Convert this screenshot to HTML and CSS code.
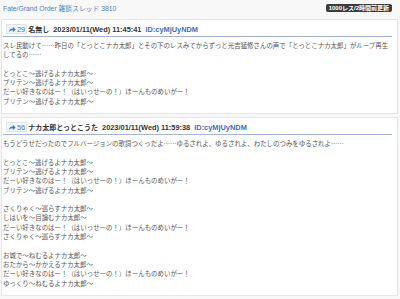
FILE: index.html
```html
<!DOCTYPE html>
<html lang="ja">
<head>
    <meta charset="UTF-8">
    <meta name="viewport" content="width=device-width, initial-scale=1.0">
    <title>Fate/Grand Order 雑談スレッド 3810</title>
    <link rel="stylesheet" href="styles.css">
</head>
<body>
    <div class="top">
        <a class="thread-title" href="#">Fate/Grand Order 雑談スレッド 3810</a>
        <span class="badge">1000レス/2時間前更新</span>
    </div>

    <div class="post">
        <div class="post-head">
            <span class="res-no">
                <svg class="arrow" viewBox="0 0 10 8" width="8" height="7"><path d="M1 7.5 C1.5 4 3.5 2.8 6 2.8 V0.5 L9.6 3.9 L6 7.3 V5 C4 5 2.3 5.6 1 7.5 Z" fill="#3f7bc4"/></svg>29
            </span>
            <span class="name">名無し</span>
            <span class="date">2023/01/11(Wed) 11:45:41</span>
            <span class="uid">ID:cyMjUyNDM</span>
        </div>
        <p class="post-body">スレ民動けて……昨日の「とっとこナカ太郎」とその下のレスみてからずっと光吉猛修さんの声で「とっとこナカ太郎」がループ再生してるの……<br><br>とっとこ～逃げるよナカ太郎～<br>ブリテン～逃げるよナカ太郎～<br>だーい好きなのはー！（はいっせーの！）ほーんものめいがー！<br>ブリテン～逃げるよナカ太郎～</p>
    </div>

    <div class="post">
        <div class="post-head">
            <span class="res-no">
                <svg class="arrow" viewBox="0 0 10 8" width="8" height="7"><path d="M1 7.5 C1.5 4 3.5 2.8 6 2.8 V0.5 L9.6 3.9 L6 7.3 V5 C4 5 2.3 5.6 1 7.5 Z" fill="#3f7bc4"/></svg>56
            </span>
            <span class="name">ナカ太郎とっとこうた</span>
            <span class="date">2023/01/11(Wed) 11:59:38</span>
            <span class="uid">ID:cyMjUyNDM</span>
        </div>
        <p class="post-body">もうどうせだったのでフルバージョンの歌詞つくったよ……ゆるされよ、ゆるされよ、わたしのつみをゆるされよ……<br><br>とっとこ～逃げるよナカ太郎～<br>ブリテン～逃げるよナカ太郎～<br>だーい好きなのはー！（はいっせーの！）ほーんものめいがー！<br>ブリテン～逃げるよナカ太郎～<br><br>さくりゃく～巡らすナカ太郎～<br>しはいを～目論むナカ太郎～<br>だーい好きなのはー！（はいっせーの！）ほーんものめいがー！<br>さくりゃく～巡らすナカ太郎～<br><br>お城で～ねむるよナカ太郎～<br>おたから～かかえるナカ太郎～<br>だーい好きなのはー！（はいっせーの！）ほーんものめいがー！<br>ゆっくり～ねむるよナカ太郎～</p>
    </div>
</body>
</html>
```

FILE: styles.css
```css
body {
    font-family: "Liberation Sans", "Noto Sans CJK JP", sans-serif;
    background-color: #f8f8f8;
    color: #555;
    margin: 0;
    padding: 0;
}
.top {
    display: flex;
    justify-content: space-between;
    align-items: center;
    height: 19px;
    padding: 0 8px 4px 3px;
    box-sizing: border-box;
}
.thread-title {
    color: #4f82c2;
    font-size: 6.8px;
    text-decoration: none;
}
.badge {
    background-color: #3d3d3d;
    color: #fff;
    font-size: 6px;
    font-weight: bold;
    line-height: 8px;
    padding: 0 3px;
    border-radius: 2px;
}
.post {
    margin: 0 2px 3px 1px;
    padding: 0 5px 0 1px;
    background: #fff;
    border: 1px solid #e6e6e6;
}
.post-head {
    display: flex;
    align-items: center;
    padding: 4px 0 2px 3px;
    border-bottom: 1px solid #a3b4d4;
    font-size: 7.4px;
    font-weight: bold;
    color: #333;
}
.res-no {
    display: flex;
    align-items: center;
    gap: 1px;
    height: 10px;
    padding: 0 1px 0 1px;
    margin-right: 1px;
    background: #f3f6fb;
    border: 1px solid #dde4ef;
    box-sizing: border-box;
    color: #3f7bc4;
    font-weight: normal;
}
.name {
    font-size: 7px;
}
.date {
    margin-left: 4px;
}
.uid {
    margin-left: 4px;
    color: #3a6fbf;
}
.post-body {
    margin: 0;
    padding: 4px 0 7px;
    font-family: "Noto Sans CJK JP", sans-serif;
    font-size: 6.45px;
    line-height: 9.3px;
    color: #555;
}
```
